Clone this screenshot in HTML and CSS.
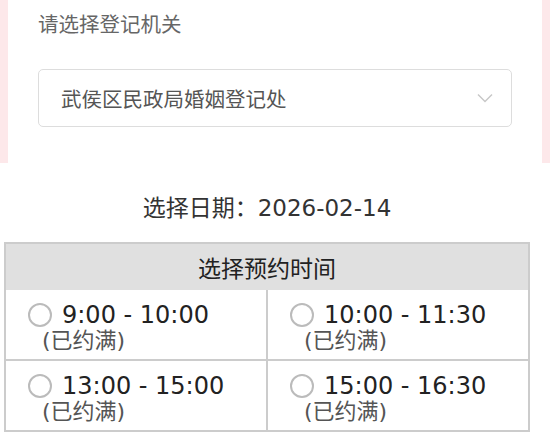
FILE: index.html
```html
<!DOCTYPE html>
<html lang="zh-CN">
<head>
    <meta charset="UTF-8">
    <meta name="viewport" content="width=device-width, initial-scale=1.0">
    <title>婚姻登记预约</title>
    <link rel="stylesheet" href="styles.css">
</head>
<body>
    <div class="top">
        <div class="card">
            <div class="label">请选择登记机关</div>
            <div class="select">
                <span>武侯区民政局婚姻登记处</span>
                <svg class="chevron" width="16" height="10" viewBox="0 0 16 10">
                    <polyline points="1,1.5 8,8.5 15,1.5" fill="none" stroke="#c8c8c8" stroke-width="1.5"/>
                </svg>
            </div>
        </div>
    </div>

    <div class="booking">
        <div class="date">选择日期：2026-02-14</div>
        <div class="slots">
            <div class="slots-head">选择预约时间</div>
            <div class="slots-grid">
                <div class="slot">
                    <div class="slot-time"><span class="radio"></span>9:00 - 10:00</div>
                    <div class="slot-note">(已约满)</div>
                </div>
                <div class="slot">
                    <div class="slot-time"><span class="radio"></span>10:00 - 11:30</div>
                    <div class="slot-note">(已约满)</div>
                </div>
                <div class="slot">
                    <div class="slot-time"><span class="radio"></span>13:00 - 15:00</div>
                    <div class="slot-note">(已约满)</div>
                </div>
                <div class="slot">
                    <div class="slot-time"><span class="radio"></span>15:00 - 16:30</div>
                    <div class="slot-note">(已约满)</div>
                </div>
            </div>
        </div>
    </div>
</body>
</html>
```

FILE: styles.css
```css
body {
    margin: 0;
    background-color: #fff;
    font-family: "DejaVu Sans", "Noto Sans CJK SC", sans-serif;
    color: #222;
}
.top {
    background-color: #fde8ea;
    padding: 0 8px;
}
.card {
    background-color: #fff;
    height: 163px;
    padding: 0 30px;
    box-sizing: border-box;
}
.label {
    padding-top: 11px;
    font-size: 20.5px;
    line-height: 28px;
    color: #666;
}
.select {
    margin-top: 30px;
    height: 58px;
    box-sizing: border-box;
    border: 1px solid #ddd;
    border-radius: 5px;
    display: flex;
    align-items: center;
    justify-content: space-between;
    padding: 0 18px 0 22px;
    font-size: 20.5px;
    color: #555;
}
.booking {
    width: 526px;
    margin-left: 4px;
}
.date {
    margin-top: 29px;
    text-align: center;
    font-size: 23px;
    line-height: 32px;
    color: #333;
}
.slots {
    margin-top: 18px;
    border: 2px solid #ccc;
}
.slots-head {
    height: 46px;
    background-color: #e0e0e0;
    display: flex;
    align-items: center;
    justify-content: center;
    font-size: 23px;
    color: #222;
}
.slots-grid {
    display: grid;
    grid-template-columns: 1fr 1fr;
    gap: 2px;
    background-color: #ccc;
}
.slot {
    height: 69px;
    box-sizing: border-box;
    background-color: #fff;
    padding: 11px 0 0 22px;
}
.slot-time {
    display: flex;
    align-items: center;
    gap: 10px;
    font-size: 24px;
    line-height: 28px;
    color: #222;
}
.radio {
    width: 24px;
    height: 24px;
    box-sizing: border-box;
    border: 2px solid #bbb;
    border-radius: 50%;
}
.slot-note {
    padding-left: 14px;
    font-size: 22px;
    line-height: 24px;
    color: #555;
}
```
